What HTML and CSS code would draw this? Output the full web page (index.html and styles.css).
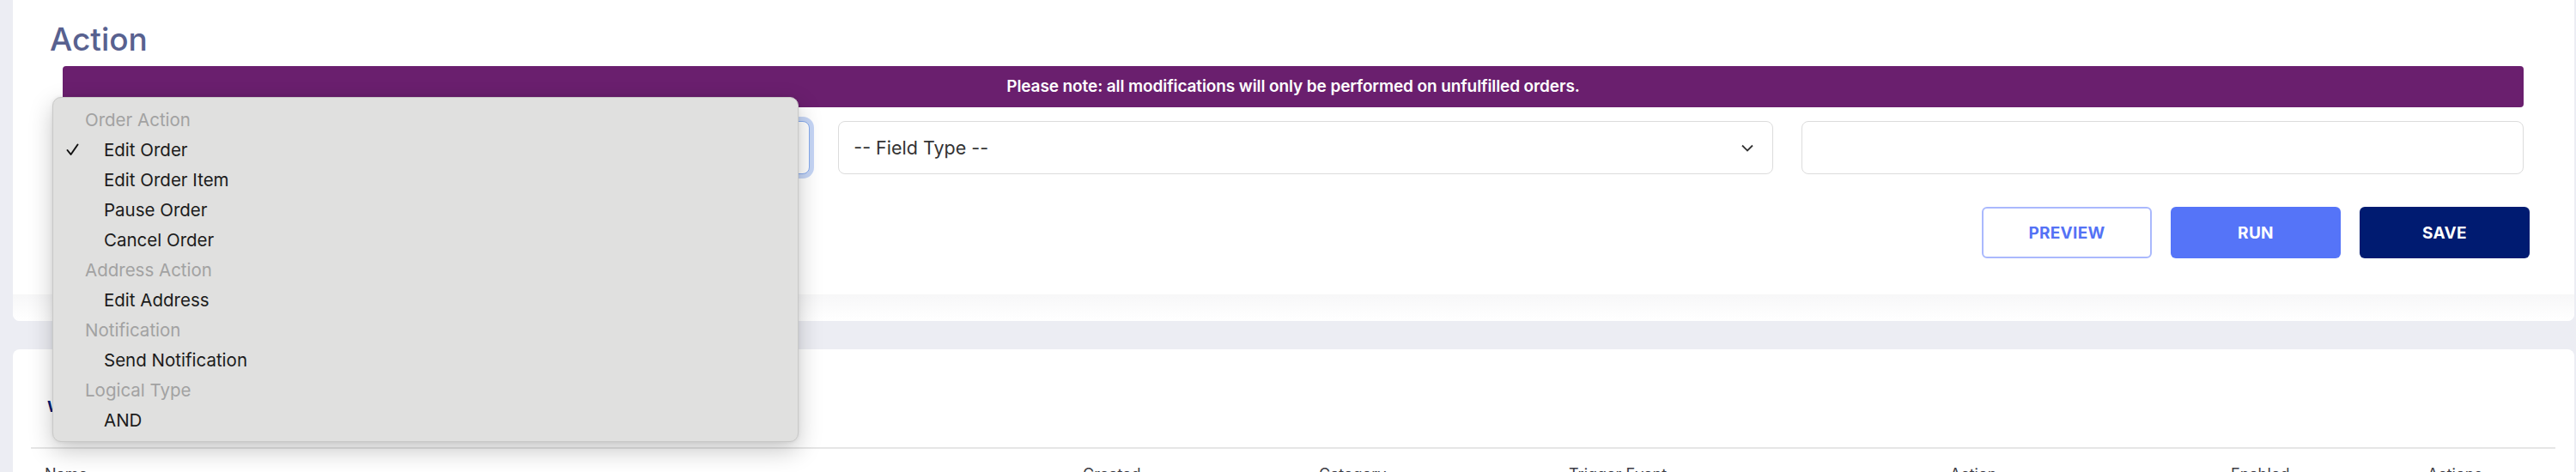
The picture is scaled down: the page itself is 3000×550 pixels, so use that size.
FILE: index.html
```html
<!DOCTYPE html>
<html lang="en">
<head>
<meta charset="utf-8">
<title>Action</title>
<link rel="stylesheet" href="styles.css">
</head>
<body>
<div class="page">
  <section class="card card-action">
    <h1 class="title">Action</h1>
    <div class="body">
      <div class="notice">Please note: all modifications will only be performed on unfulfilled orders.</div>
      <div class="fields">
        <div class="select focused">
          <span class="value">Edit Order</span>
          <svg class="chev" width="14" height="9" viewBox="0 0 14 9"><path d="M1 1.5 L7 7.5 L13 1.5" fill="none" stroke="#333" stroke-width="1.8"/></svg>
        </div>
        <div class="select">
          <span class="value">-- Field Type --</span>
          <svg class="chev" width="14" height="9" viewBox="0 0 14 9"><path d="M1 1.5 L7 7.5 L13 1.5" fill="none" stroke="#333" stroke-width="1.8"/></svg>
        </div>
        <div class="input"></div>
      </div>
      <div class="buttons">
        <button class="btn btn-outline">PREVIEW</button>
        <button class="btn btn-run">RUN</button>
        <button class="btn btn-save">SAVE</button>
      </div>
    </div>
    <div class="card-foot"></div>
  </section>

  <section class="card card-list">
    <div class="tab-bar"><span class="tab">Workflows</span></div>
    <div class="thead">
      <span>Name</span>
      <span>Created</span>
      <span>Category</span>
      <span>Trigger Event</span>
      <span>Action</span>
      <span>Enabled</span>
      <span>Actions</span>
    </div>
  </section>

  <div class="menu">
    <div class="menu-label">Order Action</div>
    <div class="menu-item checked">
      <svg class="check" width="15" height="15" viewBox="0 0 15 15"><path d="M1.5 8 L5.5 13 L13.5 1.5" fill="none" stroke="#111" stroke-width="2" stroke-linecap="round" stroke-linejoin="round"/></svg>
      Edit Order
    </div>
    <div class="menu-item">Edit Order Item</div>
    <div class="menu-item">Pause Order</div>
    <div class="menu-item">Cancel Order</div>
    <div class="menu-label">Address Action</div>
    <div class="menu-item">Edit Address</div>
    <div class="menu-label">Notification</div>
    <div class="menu-item">Send Notification</div>
    <div class="menu-label">Logical Type</div>
    <div class="menu-item">AND</div>
  </div>
</div>
</body>
</html>
```

FILE: styles.css
```css
html, body {
  margin: 0;
  background: #ecedf3;
  font-family: "Inter", "Noto Sans", sans-serif;
}

.page {
  position: relative;
  padding: 0 2px 0 15px;
  height: 550px;
  overflow: hidden;
}

.card {
  background: #ffffff;
  border-radius: 8px;
}

.card-action {
  border-radius: 0 0 8px 8px;
  padding-top: 25px;
}

.title {
  margin: 0 0 0 43px;
  font-size: 37px;
  line-height: 42px;
  font-weight: 500;
  color: #58618f;
}

.body {
  padding: 10px 59px 0 58px;
}

.notice {
  height: 48px;
  line-height: 48px;
  background: #6a1f6e;
  border-radius: 4px;
  color: #ffffff;
  text-align: center;
  font-size: 19px;
  font-weight: 600;
  letter-spacing: -0.1px;
}

.fields {
  margin-top: 16px;
  display: grid;
  grid-template-columns: 870fr 1088fr 841fr;
  column-gap: 33px;
}

.select,
.input {
  box-sizing: border-box;
  height: 62px;
  border: 1px solid #dcdcdc;
  border-radius: 8px;
  background: #fff;
}

.select {
  display: flex;
  align-items: center;
  justify-content: space-between;
  padding: 0 22px 0 17px;
  font-size: 21.5px;
  color: #333;
}

.select.focused {
  border-color: #88acee;
  box-shadow: 0 0 0 5px #c6d6f6;
}

.buttons {
  margin-top: 38px;
  margin-right: -7px;
  display: flex;
  justify-content: flex-end;
  gap: 22px;
}

.btn {
  box-sizing: border-box;
  width: 198px;
  height: 60px;
  border-radius: 6px;
  border: 0;
  font-family: "Inter", sans-serif;
  font-size: 19px;
  font-weight: 700;
  letter-spacing: 0.3px;
  color: #fff;
}

.btn-outline {
  background: #fff;
  border: 2px solid #aab9fd;
  color: #5472f5;
}

.btn-run {
  background: #5574f8;
}

.btn-save {
  background: #001b71;
}

.card-foot {
  margin-top: 42px;
  height: 31px;
  border-radius: 0 0 8px 8px;
  background: linear-gradient(#f7f7f8, #ffffff);
}

.card-list {
  margin-top: 33px;
  padding: 0 22px 0 21px;
  min-height: 300px;
}

.tab-bar {
  box-sizing: border-box;
  height: 116px;
  padding: 52px 0 0 19px;
  border-bottom: 2px solid #e6e6e6;
}

.tab {
  font-size: 18px;
  line-height: 30px;
  font-weight: 700;
  color: #001b71;
}

.thead {
  display: grid;
  grid-template-columns: 1209fr 275fr 291fr 444fr 327fr 229fr 149fr;
  padding: 18px 0 0 16px;
  font-size: 18px;
  line-height: 24px;
  color: #3d3d45;
}

.menu {
  position: absolute;
  left: 61px;
  top: 113px;
  width: 869px;
  box-sizing: border-box;
  padding: 8px 0 7px;
  background: #e0e0df;
  border: 1px solid #c9c9c8;
  border-radius: 10px;
  box-shadow: 0 10px 28px rgba(0, 0, 0, 0.22), 0 0 4px rgba(0, 0, 0, 0.08);
  font-size: 20.5px;
}

.menu-label,
.menu-item {
  height: 35px;
  line-height: 35px;
  white-space: nowrap;
}

.menu-label {
  padding-left: 37px;
  color: #a2a2a2;
}

.menu-item {
  position: relative;
  padding-left: 59px;
  color: #1b1b1b;
}

.check {
  position: absolute;
  left: 15px;
  top: 10px;
}
```
